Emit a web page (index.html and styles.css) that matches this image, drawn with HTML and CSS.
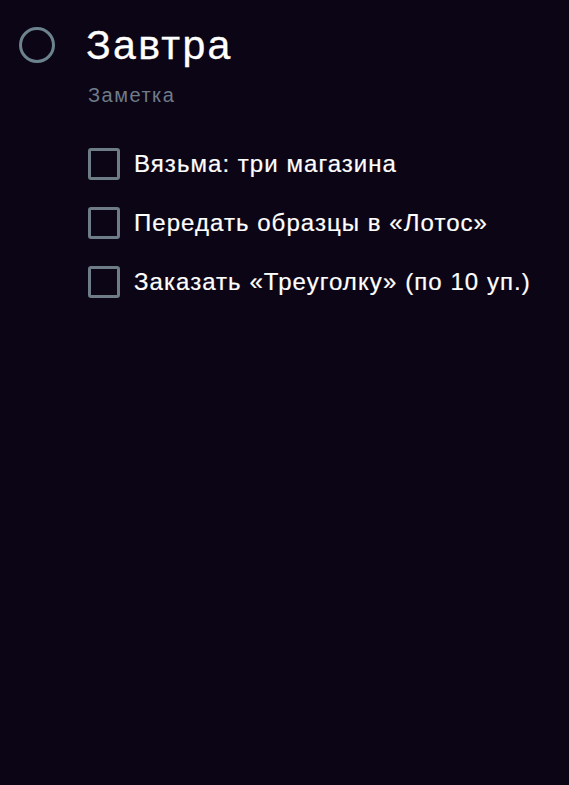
FILE: index.html
```html
<!DOCTYPE html>
<html lang="ru">
<head>
<meta charset="utf-8">
<link rel="stylesheet" href="styles.css">
</head>
<body>
<div class="note">
  <div class="header">
    <span class="circle"></span>
    <h1 class="title">Завтра</h1>
  </div>
  <div class="subtitle">Заметка</div>
  <ul class="list">
    <li class="item"><span class="box"></span><span class="text">Вязьма: три магазина</span></li>
    <li class="item"><span class="box"></span><span class="text">Передать образцы в «Лотос»</span></li>
    <li class="item"><span class="box"></span><span class="text">Заказать «Треуголку» (по 10 уп.)</span></li>
  </ul>
</div>
</body>
</html>
```
FILE: styles.css
```css
html, body {
  margin: 0;
  padding: 0;
  background: #0c0515;
  height: 100%;
}
body {
  font-family: "Liberation Sans", Arial, sans-serif;
  color: #ffffff;
}
.note {
  padding: 21px 0 0 19px;
}
.header {
  display: flex;
  align-items: center;
  gap: 31px;
}
.circle {
  width: 36px;
  height: 36px;
  border: 3px solid #6c838e;
  border-radius: 50%;
  box-sizing: border-box;
  flex: none;
}
.title {
  margin: 0;
  font-size: 41px;
  font-weight: 400;
  line-height: 48px;
  letter-spacing: 2.3px;
  -webkit-text-stroke: 0.3px #ffffff;
}
.subtitle {
  margin: 14px 0 0 69px;
  font-size: 20px;
  line-height: 24px;
  letter-spacing: 1.5px;
  color: #6e7c89;
}
.list {
  list-style: none;
  margin: 41px 0 0 69px;
  padding: 0;
  display: flex;
  flex-direction: column;
  gap: 27px;
}
.item {
  display: flex;
  align-items: center;
  gap: 14px;
}
.box {
  width: 32px;
  height: 32px;
  border: 3px solid #6d7c87;
  border-radius: 3px;
  box-sizing: border-box;
  flex: none;
}
.text {
  font-size: 24px;
  line-height: 32px;
  letter-spacing: 1.05px;
  -webkit-text-stroke: 0.2px #ffffff;
}
```
